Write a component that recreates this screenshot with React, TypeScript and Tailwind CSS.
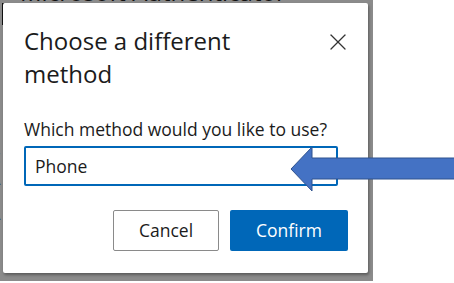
import { X } from 'lucide-react'

const font = { fontFamily: '"Open Sans", "Noto Sans", sans-serif' }

function Arrow() {
  return (
    <svg
      className="absolute left-[290px] top-[146px]"
      width="164"
      height="46"
      viewBox="0 0 164 46"
    >
      <polygon
        points="1,23 22,1 22,12 170,12 170,33 22,33 22,45"
        fill="#4472c4"
        stroke="#2f528f"
        strokeWidth="1"
      />
    </svg>
  )
}

export default function App() {
  return (
    <div className="relative flex h-[283px] w-[454px] bg-white overflow-hidden" style={font}>
      <div className="relative h-[281px] w-[373px] bg-[#8b8b8b] overflow-hidden">
        {/* page content behind the overlay */}
        <div className="absolute -top-[26px] left-[20px] text-[24px] text-[#111] whitespace-nowrap">
          Microsoft Authenticator
        </div>
        <div className="absolute left-[2px] top-[3px] h-[22px] w-[2px] bg-[#111]" />
        <div className="absolute -left-[9px] top-[148px] flex flex-col gap-[4px] text-[15px] leading-[18px] text-[#222]">
          <span>C</span>
          <span>A</span>
          <span className="mt-[13px]">A</span>
          <span>a</span>
        </div>

        <div className="relative ml-[3px] mt-[3px] h-[270px] w-[365px] rounded-[2px] bg-white pl-[21px] pr-[20px] shadow-[1px_2px_3px_rgba(0,0,0,0.35)]">
          <div className="flex items-start justify-between pt-[21px]">
            <h1 className="text-[24px] leading-[33px] text-[#1b1b1b]">
              Choose a different
              <br />
              method
            </h1>
            <X className="-mr-[4px] mt-[4px] text-[#333]" size={28} strokeWidth={1.1} />
          </div>
          <div className="mt-[28px] text-[17.5px] leading-[22px] text-[#1b1b1b]">
            Which method would you like to use?
          </div>
          <div className="mt-[6px] flex h-[40px] w-[314px] items-center rounded-[2px] border-2 border-[#0067b8] pl-[9px] text-[17.5px] text-[#1b1b1b]">
            Phone
          </div>
          <div className="mt-[24px] flex justify-end gap-[11px]">
            <button className="h-[41px] w-[106px] rounded-[2px] border border-[#8a8a8a] bg-white text-[17.5px] text-[#1b1b1b]">
              Cancel
            </button>
            <button className="h-[41px] w-[118px] rounded-[2px] bg-[#0067b8] text-[17.5px] text-white">
              Confirm
            </button>
          </div>
        </div>
      </div>
      <Arrow />
    </div>
  )
}
